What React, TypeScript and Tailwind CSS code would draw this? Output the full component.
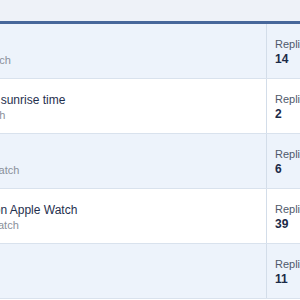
import React from 'react';

type Thread = {
  title: string;
  meta: string;
  replies: number;
};

const threads: Thread[] = [
  { title: 'Sleep tracking apps', meta: 'Ed · Jun 5, 2019 · Apple Watch', replies: 14 },
  { title: 'Watch face has the wrong sunrise time', meta: 'Jo · Jul 4, 2019 · Apple Watch', replies: 2 },
  { title: 'Battery drain', meta: 'Jack · Oct 8, 2020 · Apple Watch', replies: 6 },
  { title: 'Activity rings not syncing on Apple Watch', meta: 'Rob · Mar 3, 2019 · Apple Watch', replies: 39 },
  { title: 'Band suggestions', meta: 'Tim · Feb 2, 2020', replies: 11 },
];

const ThreadRow: React.FC<{ thread: Thread; shaded: boolean }> = ({ thread, shaded }) => (
  <div
    className={`flex h-[55px] border-b border-[#d9e2ed] ${shaded ? 'bg-[#edf3fb]' : 'bg-white'}`}
  >
    <div className="min-w-0 flex-1 overflow-hidden pt-[13px]">
      <div className="-ml-[141px] whitespace-nowrap">
        <div className="text-[12px] leading-4 text-[#1f2f4e]">{thread.title}</div>
        <div className="text-[11px] leading-[15px] text-[#8a909a]">{thread.meta}</div>
      </div>
    </div>
    <div className="w-[34px] shrink-0 overflow-hidden whitespace-nowrap border-l border-[#d3dde9] pl-2 pt-[13px]">
      <div className="text-[11px] leading-[14px] text-[#4f596b]">Replies</div>
      <div className="text-[12px] font-bold leading-4 text-[#1b2a47]">{thread.replies}</div>
    </div>
  </div>
);

const App: React.FC = () => {
  return (
    <div className="h-[300px] w-[300px] overflow-hidden bg-white font-['Liberation_Sans',Arial,sans-serif]">
      <div className="h-[21px] bg-[#eef2f8]" />
      <div className="h-[3px] bg-[#47679a]" />
      {threads.map((t, i) => (
        <ThreadRow key={t.title} thread={t} shaded={i % 2 === 0} />
      ))}
    </div>
  );
};

export default App;
